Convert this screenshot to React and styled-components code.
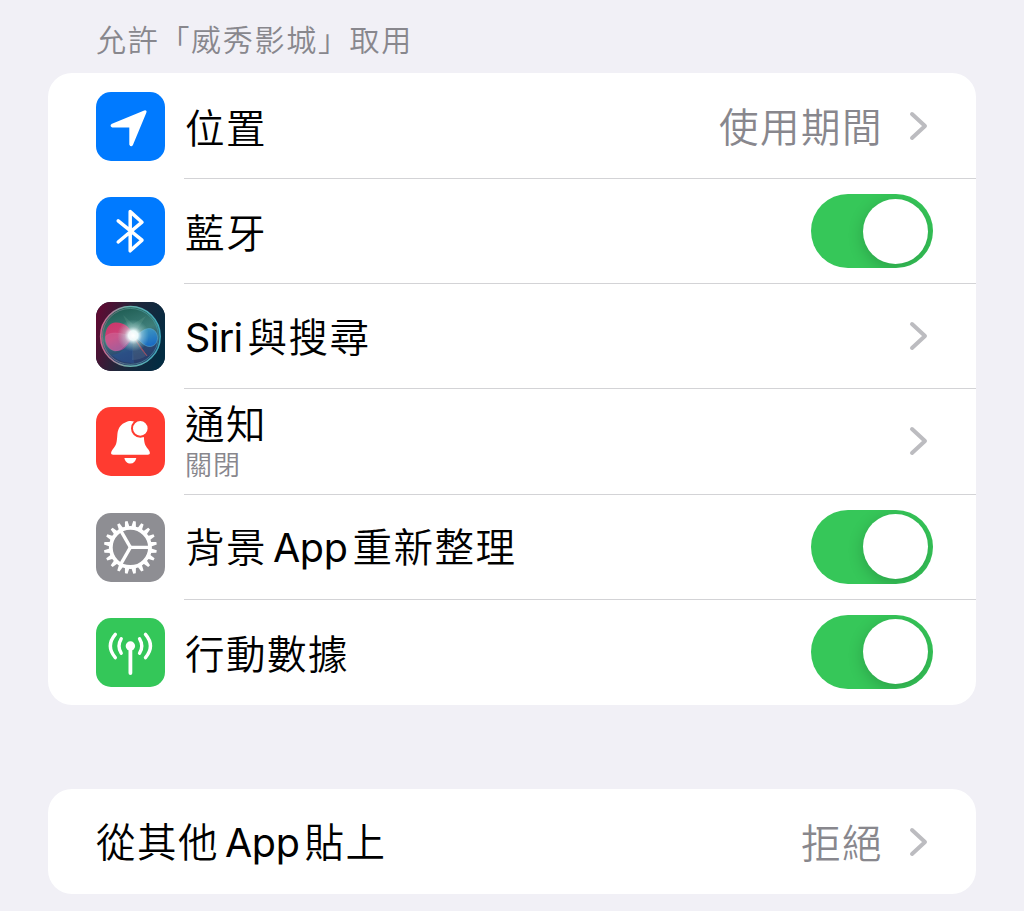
import React from "react";
import styled, { createGlobalStyle } from "styled-components";

const GlobalStyle = createGlobalStyle`
  *, *::before, *::after { box-sizing: border-box; }
  html, body { margin: 0; padding: 0; background: #f1f0f6; }
  body {
    font-family: Inter, "Noto Sans CJK TC", sans-serif;
    font-weight: 350;
    color: #000;
    overflow: hidden;
  }
`;

const Page = styled.main`
  width: 1024px;
  height: 911px;
  padding: 0 48px;
  background: #f1f0f6;
  overflow: hidden;
`;

const SectionTitle = styled.h2`
  margin: 0;
  height: 73px;
  padding: 16px 0 0 48px;
  font-family: "Noto Sans CJK TC", sans-serif;
  font-size: 30px;
  font-weight: 350;
  line-height: 44px;
  letter-spacing: 1.7px;
  color: #88878d;
  white-space: nowrap;
`;

const Card = styled.section`
  display: flex;
  flex-direction: column;
  height: ${(p) => p.$height}px;
  padding-top: ${(p) => p.$inset || 0}px;
  margin-bottom: 84.2px;
  border-radius: 24px;
  background: #fff;
  overflow: hidden;
`;

const Row = styled.div`
  flex: 1;
  display: flex;
  align-items: stretch;
  gap: 19px;
  padding-left: 48px;
`;

const IconTile = styled.svg`
  flex: none;
  align-self: center;
  width: 69px;
  height: 69px;
  border-radius: 15px;
  background: ${(p) => p.$color};
`;

const RowBody = styled.div`
  flex: 1;
  display: flex;
  align-items: center;
  justify-content: space-between;
  padding: 0 43px 0 1px;
  border-bottom: 1px solid ${(p) => (p.$last ? "transparent" : "#d3d3d6")};
`;

const Labels = styled.div`
  display: flex;
  flex-direction: column;
  padding-top: ${(p) => (p.$stacked ? 3 : 0)}px;
  padding-bottom: ${(p) => (p.$stacked ? 0 : 0.6)}px;
`;

const Label = styled.span`
  font-family: "Noto Sans CJK TC", sans-serif;
  font-size: 39.5px;
  line-height: ${(p) => (p.$compact ? 42 : 58)}px;
  letter-spacing: 1.5px;
  white-space: nowrap;
`;

const Latin = styled.span`
  margin: 0 ${(p) => p.$after}px 0 ${(p) => p.$before}px;
  font-family: Inter, sans-serif;
  font-size: 39.5px;
  font-weight: 370;
  letter-spacing: ${(p) => p.$tracking}px;
`;

const Caption = styled.span`
  font-family: "Noto Sans CJK TC", sans-serif;
  font-size: 27px;
  line-height: 41px;
  letter-spacing: 1px;
  color: #88878d;
`;

const Accessory = styled.div`
  display: flex;
  align-items: center;
  gap: 26px;
  padding-right: 5px;
`;

const Value = styled(Label)`
  padding-bottom: 2px;
  color: #88878d;
`;

const ChevronIcon = styled.svg`
  width: 19px;
  height: 30px;
  fill: none;
  stroke: #bcbcc0;
  stroke-width: 4;
  stroke-linecap: round;
  stroke-linejoin: round;
`;

const Track = styled.div`
  display: flex;
  justify-content: flex-end;
  align-items: center;
  width: 122px;
  height: 74px;
  padding: 4px 5px 4px 4px;
  border-radius: 37px;
  background: #36c759;
  overflow: hidden;
`;

const Knob = styled.div`
  width: 65px;
  height: 65px;
  border-radius: 50%;
  background: #fff;
  box-shadow: 0 4px 16px rgba(0, 0, 0, 0.2);
`;

const Chevron = () => (
  <ChevronIcon viewBox="0 0 19 30">
    <path d="M3 3 L16 15 L3 27" />
  </ChevronIcon>
);

const Toggle = () => (
  <Track role="switch" aria-checked="true">
    <Knob />
  </Track>
);

const LocationIcon = () => (
  <IconTile $color="#007aff" viewBox="0 0 69 69">
    <path
      d="M16.4 32.7 L48.6 19.4 Q50 19 49.4 20.4 L36.1 52.4 Q35.2 54.3 34.3 52.4 V34.6 H16.6 Q14.6 33.8 16.4 32.7 Z"
      fill="#fff" stroke="#fff" strokeWidth="2" strokeLinejoin="round"
    />
  </IconTile>
);

const BluetoothIcon = () => (
  <IconTile $color="#007aff" viewBox="0 0 69 69">
    <path
      d="M22.2 23.8 L46 43.2 L34.2 53.8 V14.6 L46 25.2 L22.2 45"
      fill="none" stroke="#fff" strokeWidth="3.5" strokeLinecap="round" strokeLinejoin="round"
    />
  </IconTile>
);

const SiriIcon = () => (
  <IconTile $color="#182038" viewBox="0 0 69 69">
    <defs>
      <linearGradient id="siriBase" x1="0" y1="0.3" x2="1" y2="0.6">
        <stop offset="0" stopColor="#5d0b32" />
        <stop offset="0.45" stopColor="#21263a" />
        <stop offset="1" stopColor="#032c42" />
      </linearGradient>
      <linearGradient id="siriOrb" x1="0.3" y1="0" x2="0.6" y2="1">
        <stop offset="0" stopColor="#1c5a50" />
        <stop offset="0.45" stopColor="#3f7f7a" />
        <stop offset="0.75" stopColor="#2b4772" />
        <stop offset="1" stopColor="#283a68" />
      </linearGradient>
      <linearGradient id="siriRim" x1="0" y1="0.5" x2="1" y2="0.5">
        <stop offset="0" stopColor="#d65f8c" />
        <stop offset="0.45" stopColor="#6fb3ac" />
        <stop offset="1" stopColor="#3ca8bd" />
      </linearGradient>
      <linearGradient id="siriPink" x1="0" y1="0" x2="0.5" y2="1">
        <stop offset="0" stopColor="#dc3068" />
        <stop offset="0.55" stopColor="#dc3c7a" />
        <stop offset="1" stopColor="#9a4a94" />
      </linearGradient>
      <linearGradient id="siriBlue" x1="0" y1="0" x2="0.4" y2="1">
        <stop offset="0" stopColor="#48a5cc" />
        <stop offset="1" stopColor="#1a74d0" />
      </linearGradient>
      <radialGradient id="siriGlow">
        <stop offset="0" stopColor="#fff" />
        <stop offset="0.3" stopColor="#f4ffff" stopOpacity="0.95" />
        <stop offset="0.55" stopColor="#cfeaec" stopOpacity="0.45" />
        <stop offset="1" stopColor="#9adbd5" stopOpacity="0" />
      </radialGradient>
    </defs>
    <rect width="69" height="69" fill="url(#siriBase)" />
    <circle cx="34.4" cy="34.4" r="29.8" fill="url(#siriOrb)" stroke="url(#siriRim)" strokeWidth="1.5" />
    <circle cx="34.4" cy="34.4" r="28" fill="none" stroke="url(#siriRim)" strokeWidth="1" opacity="0.5" />
    <path d="M38 34 C34 25 28 20 19 20.5 C6 22 6 47 19 49 C29 50 32 42 38 34 Z" fill="url(#siriPink)" opacity="0.9" />
    <path d="M10 34 C17 28 27 33 38 34 C30 39 29 48 19 49 C11 47 8 40 10 34 Z" fill="#c77fae" opacity="0.35" stroke="#e596c0" strokeWidth="0.7" />
    <path d="M38 34 C44 32 47 26.5 53.5 26.5 C64 27.500 64 43.500 54.500 44.500 C47 45 44 37 38 34 Z" fill="url(#siriBlue)" opacity="0.85" stroke="#62b7dc" strokeWidth="0.6" />
    <path d="M36 36 C30 45 26 52 16 53 C23 60 31 61 38 61 Z" fill="#2a5fa8" opacity="0.35" />
    <path d="M37 34 L36 58 Q44 58 50 54 Z" fill="#7d98a5" opacity="0.2" />
    <path d="M37 34 L51 54 L46 48 Z" fill="#cf5a62" stroke="#cf5a62" strokeWidth="1" opacity="0.6" />
    <path d="M37 34 L27 13 L37 22 L50 14 Z" fill="#87bca9" opacity="0.18" />
    <circle cx="37.2" cy="33.5" r="16" fill="url(#siriGlow)" />
  </IconTile>
);

const BellIcon = () => (
  <IconTile $color="#ff3b30" viewBox="0 0 69 69">
    <path
      d="M34.5 14 C40 14 46.7 18 47.6 27 C48.2 36 48.6 38 52.2 42.2 C54.2 44.7 54.8 47.7 51.8 47.7 H17.2 C14.2 47.7 14.8 44.7 16.8 42.2 C20.4 38 20.8 36 21.4 27 C22.1 20.5 25.5 16.6 29.8 15.2 C31.2 14.3 32.8 14 34.5 14 Z"
      fill="#fff"
    />
    <path d="M28.4 51 H40.3 C39.6 54.4 37.5 56.6 34.4 56.6 C31.2 56.6 29 54.4 28.4 51 Z" fill="#fff" />
    <circle cx="44.3" cy="21.4" r="8.3" fill="#fff" stroke="#ff3b30" strokeWidth="2" />
  </IconTile>
);

const TEETH = Array.from({ length: 20 }, (_, i) => i * 18);

const GearIcon = () => (
  <IconTile $color="#8e8e93" viewBox="0 0 69 69">
    <g transform="translate(34.4 34.4)" fill="none" stroke="#fff" strokeWidth="3.3">
      <circle r="19.6" strokeWidth="3.8" />
      {[0, 120, 240].map((a) => (
        <path key={a} d="M0 0 H19" transform={`rotate(${a})`} />
      ))}
      {TEETH.map((a) => (
        <path key={a} d="M20 -2.4 L26.5 -1.3 V1.3 L20 2.4 Z" fill="#fff" stroke="none" transform={`rotate(${a + 9})`} />
      ))}
    </g>
  </IconTile>
);

const AntennaIcon = () => (
  <IconTile $color="#34c759" viewBox="0 0 69 69">
    <circle cx="34.4" cy="28" r="4.7" fill="#fff" />
    <g fill="none" stroke="#fff" strokeWidth="3.4" strokeLinecap="round">
      <path d="M34.4 29 V55" strokeWidth="3.8" />
      <path d="M25.2 20.8 Q20.8 28 25.2 35.2" />
      <path d="M19.3 16.4 Q9.4 28 19.3 39.6" />
      <path d="M43.6 20.8 Q48 28 43.6 35.2" />
      <path d="M49.5 16.4 Q59.4 28 49.5 39.6" />
    </g>
  </IconTile>
);

const SettingRow = ({ icon, label, caption, value, toggle, last }) => (
  <Row>
    {icon}
    <RowBody $last={last}>
      <Labels $stacked={Boolean(caption)}>
        <Label $compact={Boolean(caption)}>{label}</Label>
        {caption && <Caption>{caption}</Caption>}
      </Labels>
      {toggle ? (
        <Toggle />
      ) : (
        <Accessory>
          {value && <Value>{value}</Value>}
          <Chevron />
        </Accessory>
      )}
    </RowBody>
  </Row>
);

const PlainRow = styled.div`
  flex: 1;
  display: flex;
  align-items: center;
  justify-content: space-between;
  padding: 0 43px 0 48px;
`;

export default function App() {
  return (
    <>
      <GlobalStyle />
      <Page>
        <SectionTitle>允許「威秀影城」取用</SectionTitle>
        <Card $height={631.9} $inset={0.9}>
          <SettingRow icon={<LocationIcon />} label="位置" value="使用期間" />
          <SettingRow icon={<BluetoothIcon />} label="藍牙" toggle />
          <SettingRow
            icon={<SiriIcon />}
            label={<><Latin $before={0} $after={5} $tracking={-0.6}>Siri</Latin>與搜尋</>}
          />
          <SettingRow icon={<BellIcon />} label="通知" caption="關閉" />
          <SettingRow
            icon={<GearIcon />}
            label={<>背景<Latin $before={6} $after={5} $tracking={-0.4}>App</Latin>重新整理</>}
            toggle
          />
          <SettingRow icon={<AntennaIcon />} label="行動數據" toggle last />
        </Card>
        <Card $height={105}>
          <PlainRow>
            <Label>從其他<Latin $before={6} $after={5} $tracking={-0.4}>App</Latin>貼上</Label>
            <Accessory>
              <Value>拒絕</Value>
              <Chevron />
            </Accessory>
          </PlainRow>
        </Card>
      </Page>
    </>
  );
}
